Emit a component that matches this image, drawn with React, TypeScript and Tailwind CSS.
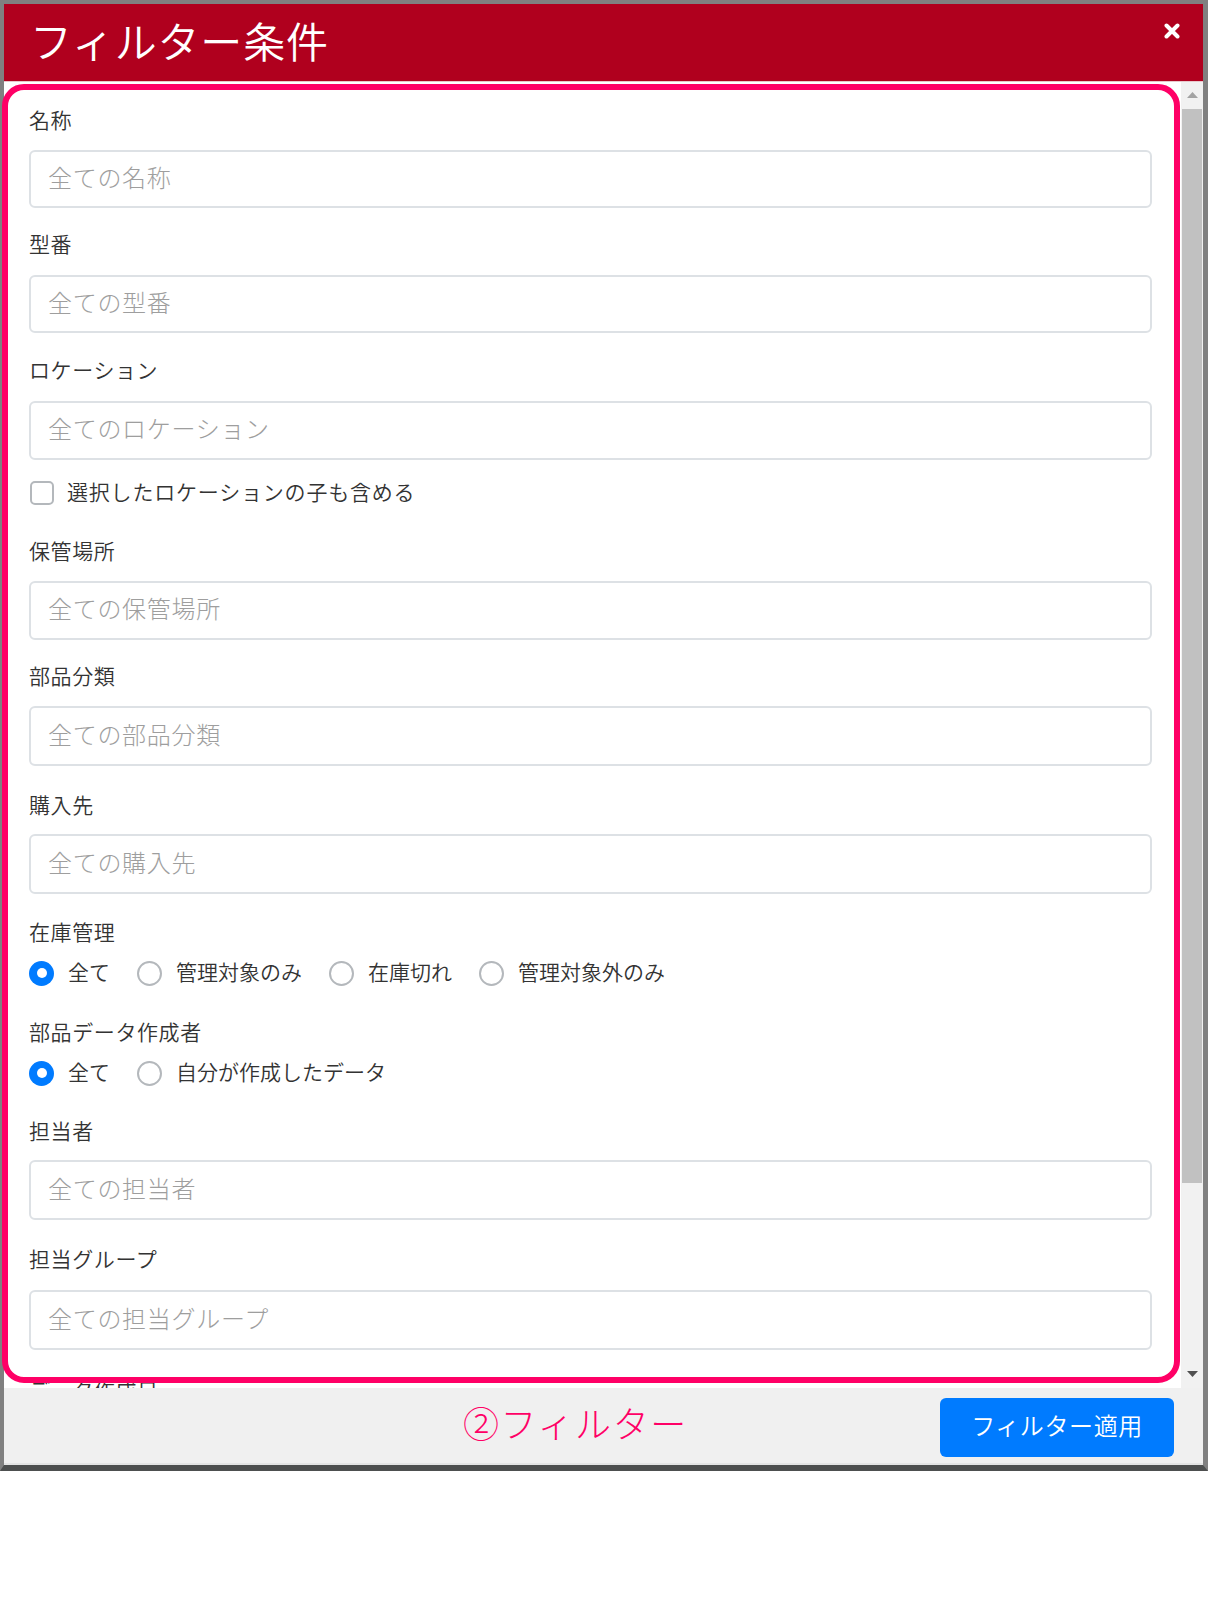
import React from "react";

const FONT = "font-['Noto_Sans_CJK_JP',sans-serif]";

function Label({ text, mt }: { text: string; mt: string }) {
  return (
    <div className={`${mt} h-[30px] text-[21px] leading-[26px] font-[350] tracking-[0.6px] text-[#333333] whitespace-nowrap`}>
      {text}
    </div>
  );
}

function Input({ placeholder, mt, h }: { placeholder: string; mt: string; h: string }) {
  return (
    <div
      className={`${mt} ${h} w-full border-2 border-[#dde1e5] rounded-[6px] bg-white flex items-center pl-[17px] pb-[5px]`}
    >
      <span className="text-[24px] leading-none font-light tracking-[0.7px] text-[#9e9e9e] whitespace-nowrap">
        {placeholder}
      </span>
    </div>
  );
}

function Radio({ checked, label }: { checked?: boolean; label: string }) {
  return (
    <div className="flex items-center gap-[14px]">
      {checked ? (
        <div className="w-[25px] h-[25px] rounded-full bg-[#007bff] flex items-center justify-center">
          <div className="w-[10px] h-[10px] rounded-full bg-white" />
        </div>
      ) : (
        <div className="w-[25px] h-[25px] rounded-full border-2 border-[#b4b8bc] bg-white" />
      )}
      <span className="text-[21px] leading-[26px] pb-[4px] font-[350] text-[#333333] whitespace-nowrap">
        {label}
      </span>
    </div>
  );
}

export default function App() {
  return (
    <div className={`relative w-[1208px] h-[1597px] bg-white ${FONT}`}>
      <div className="w-[1208px] flex flex-col border-l-4 border-t-4 border-r-[5px] border-b-[6px] border-[#808080] border-b-[#4d4f4f]">
        {/* Header */}
        <div className="h-[78px] shrink-0 bg-[#b0001e] flex justify-between pl-[26px] pr-[23px] border-b border-[#e8c8cc]">
          <div className="self-center pb-[6px] text-[42px] leading-none font-[350] text-white tracking-[0.8px] whitespace-nowrap">
            フィルター条件
          </div>
          <svg className="mt-[19px]" width="16" height="16" viewBox="0 0 16 16">
            <path d="M2.5 2.5 L13.5 13.5 M13.5 2.5 L2.5 13.5" stroke="white" strokeWidth="4" strokeLinecap="round" />
          </svg>
        </div>
        {/* Body */}
        <div className="h-[1306px] shrink-0 flex bg-white">
          <div className="flex-1 overflow-hidden pl-[25px] pr-[29px] pt-[24px]">
            <Label text="名称" mt="mt-0" />
            <Input placeholder="全ての名称" mt="mt-[14px]" h="h-[58px]" />
            <Label text="型番" mt="mt-[22px]" />
            <Input placeholder="全ての型番" mt="mt-[15px]" h="h-[58px]" />
            <Label text="ロケーション" mt="mt-[23px]" />
            <Input placeholder="全てのロケーション" mt="mt-[15px]" h="h-[59px]" />
            <div className="mt-[18px] h-[30px] flex items-center gap-[13px]">
              <div className="w-[24px] h-[24px] border-2 border-[#b4b8bc] rounded-[5px] bg-white ml-[1px]" />
              <span className="text-[21px] leading-[26px] pb-[4px] font-[350] tracking-[0.8px] text-[#333333] whitespace-nowrap">
                選択したロケーションの子も含める
              </span>
            </div>
            <Label text="保管場所" mt="mt-[29px]" />
            <Input placeholder="全ての保管場所" mt="mt-[14px]" h="h-[59px]" />
            <Label text="部品分類" mt="mt-[22px]" />
            <Input placeholder="全ての部品分類" mt="mt-[14px]" h="h-[60px]" />
            <Label text="購入先" mt="mt-[25px]" />
            <Input placeholder="全ての購入先" mt="mt-[13px]" h="h-[60px]" />
            <Label text="在庫管理" mt="mt-[24px]" />
            <div className="mt-[10px] h-[30px] flex items-center gap-[27px]">
              <Radio checked label="全て" />
              <Radio label="管理対象のみ" />
              <Radio label="在庫切れ" />
              <Radio label="管理対象外のみ" />
            </div>
            <Label text="部品データ作成者" mt="mt-[30px]" />
            <div className="mt-[10px] h-[30px] flex items-center gap-[27px]">
              <Radio checked label="全て" />
              <Radio label="自分が作成したデータ" />
            </div>
            <Label text="担当者" mt="mt-[29px]" />
            <Input placeholder="全ての担当者" mt="mt-[13px]" h="h-[60px]" />
            <Label text="担当グループ" mt="mt-[25px]" />
            <Input placeholder="全ての担当グループ" mt="mt-[15px]" h="h-[60px]" />
            <Label text="データ作成日" mt="mt-[26px]" />
            <Input placeholder="" mt="mt-[14px]" h="h-[60px]" />
          </div>
          {/* Scrollbar */}
          <div className="w-[22px] bg-[#f1f1f1] flex flex-col">
            <div className="h-[25px] flex items-center justify-center">
              <svg width="11" height="6" viewBox="0 0 11 6">
                <polygon points="0,6 11,6 5.5,0" fill="#a3a3a3" />
              </svg>
            </div>
            <div className="mt-[2px] h-[1074px] mx-[1px] bg-[#c1c1c1]" />
            <div className="flex-1" />
            <div className="h-[24px] flex items-start justify-center pt-[7px]">
              <svg width="11" height="6" viewBox="0 0 11 6">
                <polygon points="0,0 11,0 5.5,6" fill="#505050" />
              </svg>
            </div>
          </div>
        </div>
        {/* Footer */}
        <div className="h-[77px] shrink-0 bg-[#f0f0f0] flex items-start border-b-2 border-[#e4e4e4]">
          <div className="ml-[459px] mt-[14px] text-[36px] leading-[40px] font-light tracking-[1.6px] text-[#ff0066] whitespace-nowrap">
            ②フィルター
          </div>
          <div className="ml-auto mr-[29px] mt-[10px] w-[234px] h-[59px] rounded-[6px] bg-[#007bff] flex items-center justify-center pb-[5px]">
            <span className="text-[24px] leading-none font-[350] tracking-[0.6px] text-white whitespace-nowrap">
              フィルター適用
            </span>
          </div>
        </div>
      </div>
      {/* Annotation frame */}
      <div className="absolute left-[2px] top-[84px] w-[1178px] h-[1299px] border-[6px] border-[#ff0066] rounded-[22px] pointer-events-none" />
    </div>
  );
}
